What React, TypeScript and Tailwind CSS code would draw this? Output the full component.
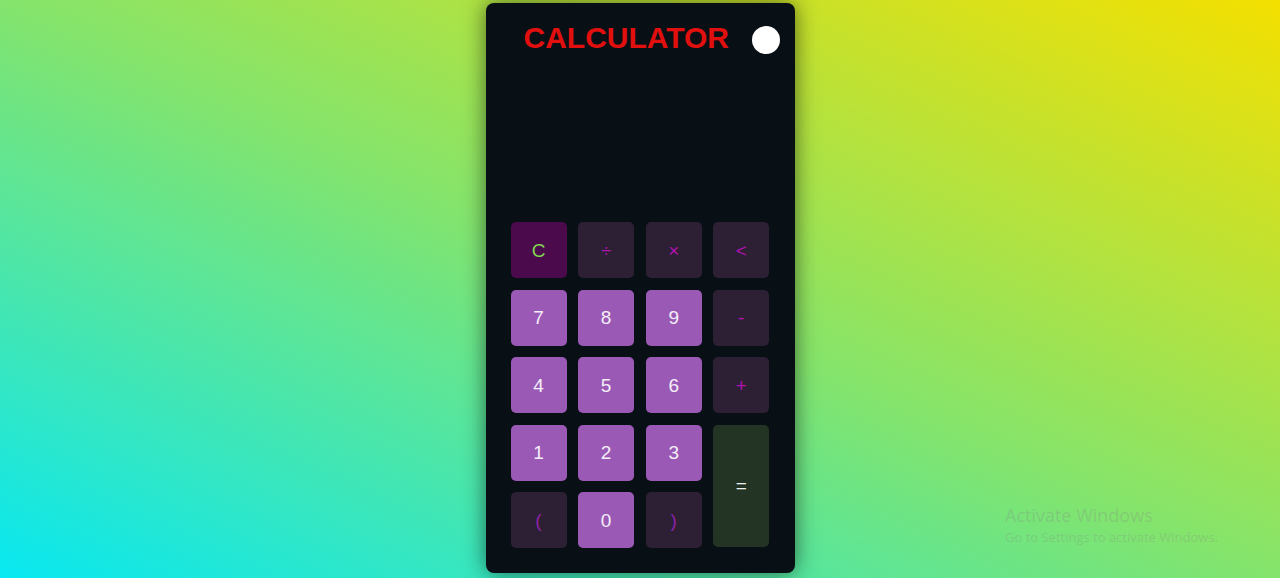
import React from 'react';

type Key = {
  label: string;
  kind: 'num' | 'op' | 'clear' | 'paren' | 'equal';
};

const keys: Key[] = [
  { label: 'C', kind: 'clear' },
  { label: '÷', kind: 'op' },
  { label: '×', kind: 'op' },
  { label: '<', kind: 'op' },
  { label: '7', kind: 'num' },
  { label: '8', kind: 'num' },
  { label: '9', kind: 'num' },
  { label: '-', kind: 'op' },
  { label: '4', kind: 'num' },
  { label: '5', kind: 'num' },
  { label: '6', kind: 'num' },
  { label: '+', kind: 'op' },
  { label: '1', kind: 'num' },
  { label: '2', kind: 'num' },
  { label: '3', kind: 'num' },
  { label: '=', kind: 'equal' },
  { label: '(', kind: 'paren' },
  { label: '0', kind: 'num' },
  { label: ')', kind: 'paren' },
];

const styles: Record<Key['kind'], string> = {
  num: 'bg-[#9b59b6] text-[#f4eef6]',
  op: 'bg-[#2d1f34] text-[#b012b0]',
  clear: 'bg-[#4a0a4c] text-[#7fd650]',
  paren: 'bg-[#2d1f34] text-[#8e22a8]',
  equal: 'bg-[#233424] text-[#f0f0f0] row-span-2',
};

const App: React.FC = () => {
  return (
    <div className="relative h-[578px] w-full overflow-hidden bg-[linear-gradient(to_top_right,#08e8f2,#84e46c_50%,#f4e000)] font-['Liberation_Sans',Arial,sans-serif]">
      <div className="flex justify-center pt-[3px]">
        <div className="flex h-[570px] w-[309px] flex-col rounded-lg bg-[#080f15] shadow-[0_0_22px_rgba(0,0,0,0.55)]">
          <div className="flex items-center pl-[38px] pr-[15px] pt-[18px]">
            <h1 className="text-[30px] font-bold leading-[34px] text-[#e20f0f]">CALCULATOR</h1>
            <span className="ml-auto mt-[4px] block h-[28px] w-[28px] rounded-full bg-white"></span>
          </div>

          <div className="flex-1"></div>

          <div className="grid grid-cols-[repeat(4,56px)] auto-rows-[56px] gap-x-[11.6px] gap-y-[11.5px] px-[25px] pb-[25px]">
            {keys.map((k) => (
              <button
                key={k.label}
                className={`flex items-center justify-center rounded-[5px] text-[19px] leading-none ${styles[k.kind]} ${k.kind === 'equal' ? 'h-[122px]' : ''}`}
              >
                {k.label}
              </button>
            ))}
          </div>
        </div>
      </div>

      <div className="pointer-events-none absolute left-[1005px] top-[504px] font-['Open_Sans',sans-serif] text-[rgba(130,130,130,0.26)]">
        <div className="text-[18px] leading-[22px]">Activate Windows</div>
        <div className="mt-[3px] text-[13px] leading-[16px]">Go to Settings to activate Windows.</div>
      </div>
    </div>
  );
};

export default App;
